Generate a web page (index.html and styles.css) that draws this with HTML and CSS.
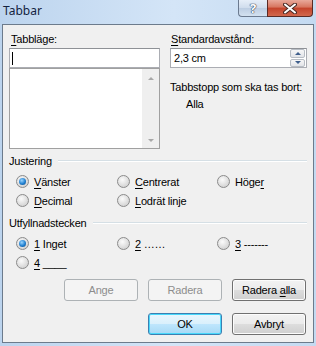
FILE: index.html
```html
<!DOCTYPE html>
<html lang="sv">
<head>
    <meta charset="UTF-8">
    <title>Tabbar</title>
    <link rel="stylesheet" href="styles.css">
</head>
<body>
<div class="window">
    <div class="titlebar">
        <span class="title">Tabbar</span>
        <div class="caption">
            <span class="cap help">?</span>
            <span class="cap close">
                <svg width="14" height="11" viewBox="0 0 14 11">
                    <path d="M2 1.5 L12 9.5 M12 1.5 L2 9.5" stroke="#4a2a25" stroke-width="4" stroke-linecap="round"/>
                    <path d="M2 1.5 L12 9.5 M12 1.5 L2 9.5" stroke="#fff" stroke-width="2" stroke-linecap="round"/>
                </svg>
            </span>
        </div>
    </div>

    <div class="client">
        <div class="top">
            <div class="col">
                <div class="lbl"><u>T</u>abbläge:</div>
                <div class="field"><span class="caret"></span></div>
                <div class="list">
                    <div class="vscroll">
                        <span class="tri up"></span>
                        <span class="tri down"></span>
                    </div>
                </div>
            </div>
            <div class="col">
                <div class="lbl"><u>S</u>tandardavstånd:</div>
                <div class="field spin">
                    <span class="val">2,3 cm</span>
                    <div class="spinbtns">
                        <span class="sb"><span class="btri up"></span></span>
                        <span class="sb"><span class="btri down"></span></span>
                    </div>
                </div>
                <div class="note">Tabbstopp som ska tas bort:</div>
                <div class="note indent">Alla</div>
            </div>
        </div>

        <div class="group">
            <div class="ghead"><span>Justering</span><span class="rule"></span></div>
            <div class="radios">
                <div class="opt"><span class="radio on"></span><span><u>V</u>änster</span></div>
                <div class="opt"><span class="radio"></span><span><u>C</u>entrerat</span></div>
                <div class="opt"><span class="radio"></span><span>Höge<u>r</u></span></div>
                <div class="opt"><span class="radio"></span><span><u>D</u>ecimal</span></div>
                <div class="opt"><span class="radio"></span><span><u>L</u>odrät linje</span></div>
            </div>
        </div>

        <div class="group second">
            <div class="ghead"><span>Utfyllnadstecken</span><span class="rule"></span></div>
            <div class="radios">
                <div class="opt"><span class="radio on"></span><span><u>1</u> Inget</span></div>
                <div class="opt"><span class="radio"></span><span><u>2</u> ……</span></div>
                <div class="opt"><span class="radio"></span><span><u>3</u> -------</span></div>
                <div class="opt"><span class="radio"></span><span><u>4</u> ____</span></div>
            </div>
        </div>

        <div class="btnrow">
            <span class="btn off">Ange</span>
            <span class="btn off">Radera</span>
            <span class="btn"><span>Radera <u>a</u>lla</span></span>
        </div>
        <div class="btnrow last">
            <span class="btn default">OK</span>
            <span class="btn">Avbryt</span>
        </div>
    </div>
</div>
</body>
</html>
```

FILE: styles.css
```css
* {
    box-sizing: border-box;
}
body {
    margin: 0;
    font-family: "Liberation Sans", Arial, sans-serif;
    font-size: 11px;
    letter-spacing: -0.2px;
    color: #000;
    background: #c8dcf1;
}
u {
    text-decoration: underline;
    text-underline-offset: 2px;
}
.window {
    width: 316px;
    height: 346px;
    background: linear-gradient(to right, #bcd4ee, #d4e5f7 55%, #c4daf1);
    padding: 0 2px 3px 2px;
    display: flex;
    flex-direction: column;
}
.titlebar {
    height: 24px;
    display: flex;
    justify-content: space-between;
    align-items: flex-start;
}
.title {
    font-family: "Noto Sans", sans-serif;
    letter-spacing: 0;
    font-size: 12px;
    color: #13233f;
    padding: 2px 0 0 1px;
}
.caption {
    display: flex;
    margin-right: 1px;
}
.cap {
    height: 17px;
    display: flex;
    align-items: center;
    justify-content: center;
    border: 1px solid #6b7a8f;
    border-top: none;
}
.help {
    width: 29px;
    border-radius: 0 0 0 4px;
    border-right: none;
    background: linear-gradient(#e6eef8, #cfdcec 50%, #bccde2 51%, #d3e1f0);
    color: #fff;
    font-family: "Noto Sans", sans-serif;
    font-size: 13px;
    font-weight: bold;
    text-shadow: 0 0 1px #2d3c55, 0 0 1px #2d3c55, 0 0 1px #2d3c55;
}
.close {
    width: 46px;
    border-radius: 0 0 4px 0;
    border-color: #5a2a24;
    background: linear-gradient(#e9a99b, #d7755f 45%, #c4432b 50%, #d1684d);
}
.client {
    flex: 1;
    background: #f0f0f0;
    border: 1px solid #6c7b8c;
    padding: 0 6px;
}
.top {
    display: grid;
    grid-template-columns: 151px 137px;
    column-gap: 10px;
    padding-top: 7px;
}
.lbl {
    height: 15px;
    line-height: 15px;
    padding-left: 2px;
    margin-bottom: 1px;
}
.col + .col .lbl {
    padding-left: 1px;
}
.field {
    height: 20px;
    background: #fff;
    border: 1px solid #abadb3;
    border-top-color: #8e9196;
    display: flex;
    align-items: center;
}
.caret {
    width: 1px;
    height: 13px;
    background: #000;
    margin-left: 2px;
}
.list {
    height: 81px;
    background: #fff;
    border: 1px solid #a0a0a0;
    display: flex;
    justify-content: flex-end;
}
.vscroll {
    width: 17px;
    background: #efefef;
    display: flex;
    flex-direction: column;
    justify-content: space-between;
    align-items: center;
    padding: 8px 0 6px;
}
.tri,
.btri {
    width: 0;
    height: 0;
    border-left: 3px solid transparent;
    border-right: 3px solid transparent;
}
.tri.up {
    border-bottom: 3px solid #a8a8a8;
}
.tri.down {
    border-top: 3px solid #a8a8a8;
}
.spin .val {
    flex: 1;
    padding-left: 3px;
}
.spinbtns {
    width: 15px;
    height: 18px;
    display: flex;
    flex-direction: column;
    gap: 1px;
    margin-right: 1px;
}
.sb {
    flex: 1;
    background: linear-gradient(#f7f7f7, #e2e4e8);
    border: 1px solid #b8bdc4;
    border-radius: 2px;
    display: flex;
    align-items: center;
    justify-content: center;
}
.btri.up {
    border-bottom: 3px solid #3f5f8c;
}
.btri.down {
    border-top: 3px solid #3f5f8c;
}
.note {
    line-height: 15px;
    margin-top: 12px;
}
.note.indent {
    margin-top: 2px;
    padding-left: 16px;
}
.group {
    margin-top: 4px;
}
.group.second {
    margin-top: 7px;
}
.ghead {
    display: flex;
    align-items: center;
    height: 15px;
}
.ghead span:first-child {
    margin-right: 6px;
}
.rule {
    flex: 1;
    height: 2px;
    border-top: 1px solid #d5dfe5;
    border-bottom: 1px solid #fff;
}
.radios {
    display: grid;
    grid-template-columns: 101px 100px 80px;
    row-gap: 4px;
    padding: 6px 0 0 7px;
}
.opt {
    display: flex;
    align-items: center;
    height: 15px;
}
.radio {
    width: 13px;
    height: 13px;
    border-radius: 50%;
    border: 1px solid #8b8b8b;
    background: radial-gradient(circle at 40% 35%, #fbfbfb, #dcdcdc 60%, #c9c9c9);
    margin-right: 5px;
    display: flex;
    align-items: center;
    justify-content: center;
}
.radio.on::after {
    content: "";
    width: 7px;
    height: 7px;
    border-radius: 50%;
    background: radial-gradient(circle at 40% 35%, #9ad5ff, #1f7fd0 55%, #11477e);
}
.btnrow {
    display: flex;
    justify-content: flex-end;
    gap: 10px;
    margin-top: 9px;
    padding-right: 1px;
}
.btnrow.last {
    margin-top: 12px;
}
.btn {
    width: 74px;
    height: 22px;
    border: 1px solid #707070;
    border-radius: 3px;
    background: linear-gradient(#f2f2f2, #ebebeb 50%, #dddddd 51%, #cfcfcf);
    box-shadow: inset 0 0 0 1px #fcfcfc;
    display: flex;
    align-items: center;
    justify-content: center;
}
.btn.off {
    border-color: #adb2b5;
    background: #f4f4f4;
    box-shadow: none;
    color: #8d8d8d;
}
.btn.default {
    border-color: #3c7fb1;
    box-shadow: inset 0 0 0 1px #48d8fb;
    background: linear-gradient(#eaf6fd, #d9f0fc 50%, #bee6fd 51%, #a7d9f5);
}
```
